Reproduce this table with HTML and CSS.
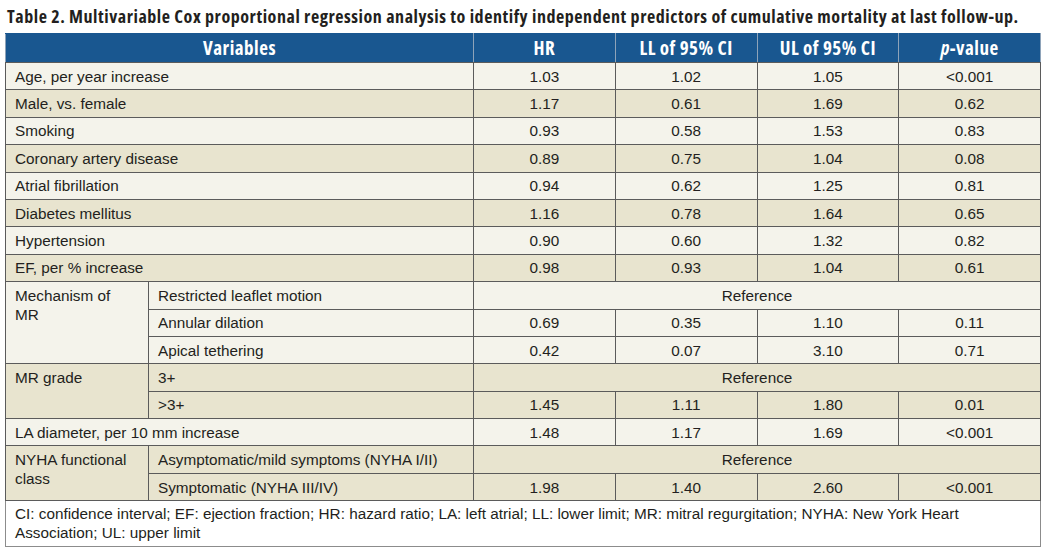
FILE: index.html
```html
<!DOCTYPE html>
<html>
<head>
<meta charset="utf-8">
<link rel="stylesheet" href="styles.css">
</head>
<body>
<h1 class="title"><span class="title-text">Table 2. Multivariable Cox proportional regression analysis to identify independent predictors of cumulative mortality at last follow-up.</span></h1>
<table class="data">
  <colgroup>
    <col class="c-var1"><col class="c-var2"><col class="c-num"><col class="c-num"><col class="c-num"><col class="c-num">
  </colgroup>
  <thead>
    <tr class="head">
      <th colspan="2">Variables</th>
      <th>HR</th>
      <th>LL of 95% CI</th>
      <th>UL of 95% CI</th>
      <th><i>p</i>-value</th>
    </tr>
  </thead>
  <tbody>
    <tr class="light"><td colspan="2" class="lbl">Age, per year increase</td><td>1.03</td><td>1.02</td><td>1.05</td><td>&lt;0.001</td></tr>
    <tr class="dark"><td colspan="2" class="lbl">Male, vs. female</td><td>1.17</td><td>0.61</td><td>1.69</td><td>0.62</td></tr>
    <tr class="light"><td colspan="2" class="lbl">Smoking</td><td>0.93</td><td>0.58</td><td>1.53</td><td>0.83</td></tr>
    <tr class="dark"><td colspan="2" class="lbl">Coronary artery disease</td><td>0.89</td><td>0.75</td><td>1.04</td><td>0.08</td></tr>
    <tr class="light"><td colspan="2" class="lbl">Atrial fibrillation</td><td>0.94</td><td>0.62</td><td>1.25</td><td>0.81</td></tr>
    <tr class="dark"><td colspan="2" class="lbl">Diabetes mellitus</td><td>1.16</td><td>0.78</td><td>1.64</td><td>0.65</td></tr>
    <tr class="light"><td colspan="2" class="lbl">Hypertension</td><td>0.90</td><td>0.60</td><td>1.32</td><td>0.82</td></tr>
    <tr class="dark"><td colspan="2" class="lbl">EF, per % increase</td><td>0.98</td><td>0.93</td><td>1.04</td><td>0.61</td></tr>
    <tr class="light"><td rowspan="3" class="lbl group narrow">Mechanism of MR</td><td class="lbl">Restricted leaflet motion</td><td colspan="4">Reference</td></tr>
    <tr class="light"><td class="lbl">Annular dilation</td><td>0.69</td><td>0.35</td><td>1.10</td><td>0.11</td></tr>
    <tr class="light"><td class="lbl">Apical tethering</td><td>0.42</td><td>0.07</td><td>3.10</td><td>0.71</td></tr>
    <tr class="dark"><td rowspan="2" class="lbl group">MR grade</td><td class="lbl">3+</td><td colspan="4">Reference</td></tr>
    <tr class="dark"><td class="lbl">&gt;3+</td><td>1.45</td><td>1.11</td><td>1.80</td><td>0.01</td></tr>
    <tr class="light"><td colspan="2" class="lbl">LA diameter, per 10 mm increase</td><td>1.48</td><td>1.17</td><td>1.69</td><td>&lt;0.001</td></tr>
    <tr class="dark"><td rowspan="2" class="lbl group">NYHA functional class</td><td class="lbl">Asymptomatic/mild symptoms (NYHA I/II)</td><td colspan="4">Reference</td></tr>
    <tr class="dark"><td class="lbl">Symptomatic (NYHA III/IV)</td><td>1.98</td><td>1.40</td><td>2.60</td><td>&lt;0.001</td></tr>
    <tr class="foot"><td colspan="6">CI: confidence interval; EF: ejection fraction; HR: hazard ratio; LA: left atrial; LL: lower limit; MR: mitral regurgitation; NYHA: New York Heart Association; UL: upper limit</td></tr>
  </tbody>
</table>
</body>
</html>
```
FILE: styles.css
```css
html, body {
  margin: 0;
  padding: 0;
  background: #ffffff;
}

body {
  font-family: "Liberation Sans", Arial, sans-serif;
  color: #231f20;
}

.title {
  margin: 0;
  padding: 6px 0 0 7px;
  height: 27px;
  box-sizing: border-box;
  font-family: "Open Sans", "DejaVu Sans Condensed", sans-serif;
  font-stretch: 75%;
  font-weight: 700;
  font-size: 18px;
  letter-spacing: 0.55px;
  line-height: 20px;
  color: #231f20;
  white-space: nowrap;
}

.data {
  margin: 6px 0 0 5px;
  width: 1035px;
  table-layout: fixed;
  border-collapse: collapse;
  font-size: 15.3px;
  border: 1px solid #8c8c8c;
}

.c-var1 { width: 143px; }
.c-var2 { width: 325px; }
.c-num { width: 141.75px; }

.data td, .data th {
  padding: 0;
  text-align: center;
  border: 1px solid #5b5b5b;
  line-height: 19px;
}

.head th {
  height: 28px;
  background: #195790;
  color: #ffffff;
  font-family: "Open Sans", "DejaVu Sans Condensed", sans-serif;
  font-stretch: 75%;
  font-weight: 700;
  font-size: 19px;
  letter-spacing: 0.5px;
  border-top: 1px solid #195790;
  border-left: 1px solid #8ea3b9;
  border-right: 1px solid #8ea3b9;
  border-bottom: 1px solid #5b5b5b;
}

.data tbody tr { height: 27.4px; }

.light td { background: #f4f3eb; }
.dark td { background: #e8e4cf; }

.data td.lbl {
  text-align: left;
  padding-left: 9px;
}

.data td.group {
  vertical-align: top;
  padding-top: 4px;
}

.data td.narrow { padding-right: 24px; }

.foot td {
  background: #ffffff;
  text-align: left;
  padding: 3px 20px 4px 9px;
  height: 37px;
  border-color: #8c8c8c;
}
```
